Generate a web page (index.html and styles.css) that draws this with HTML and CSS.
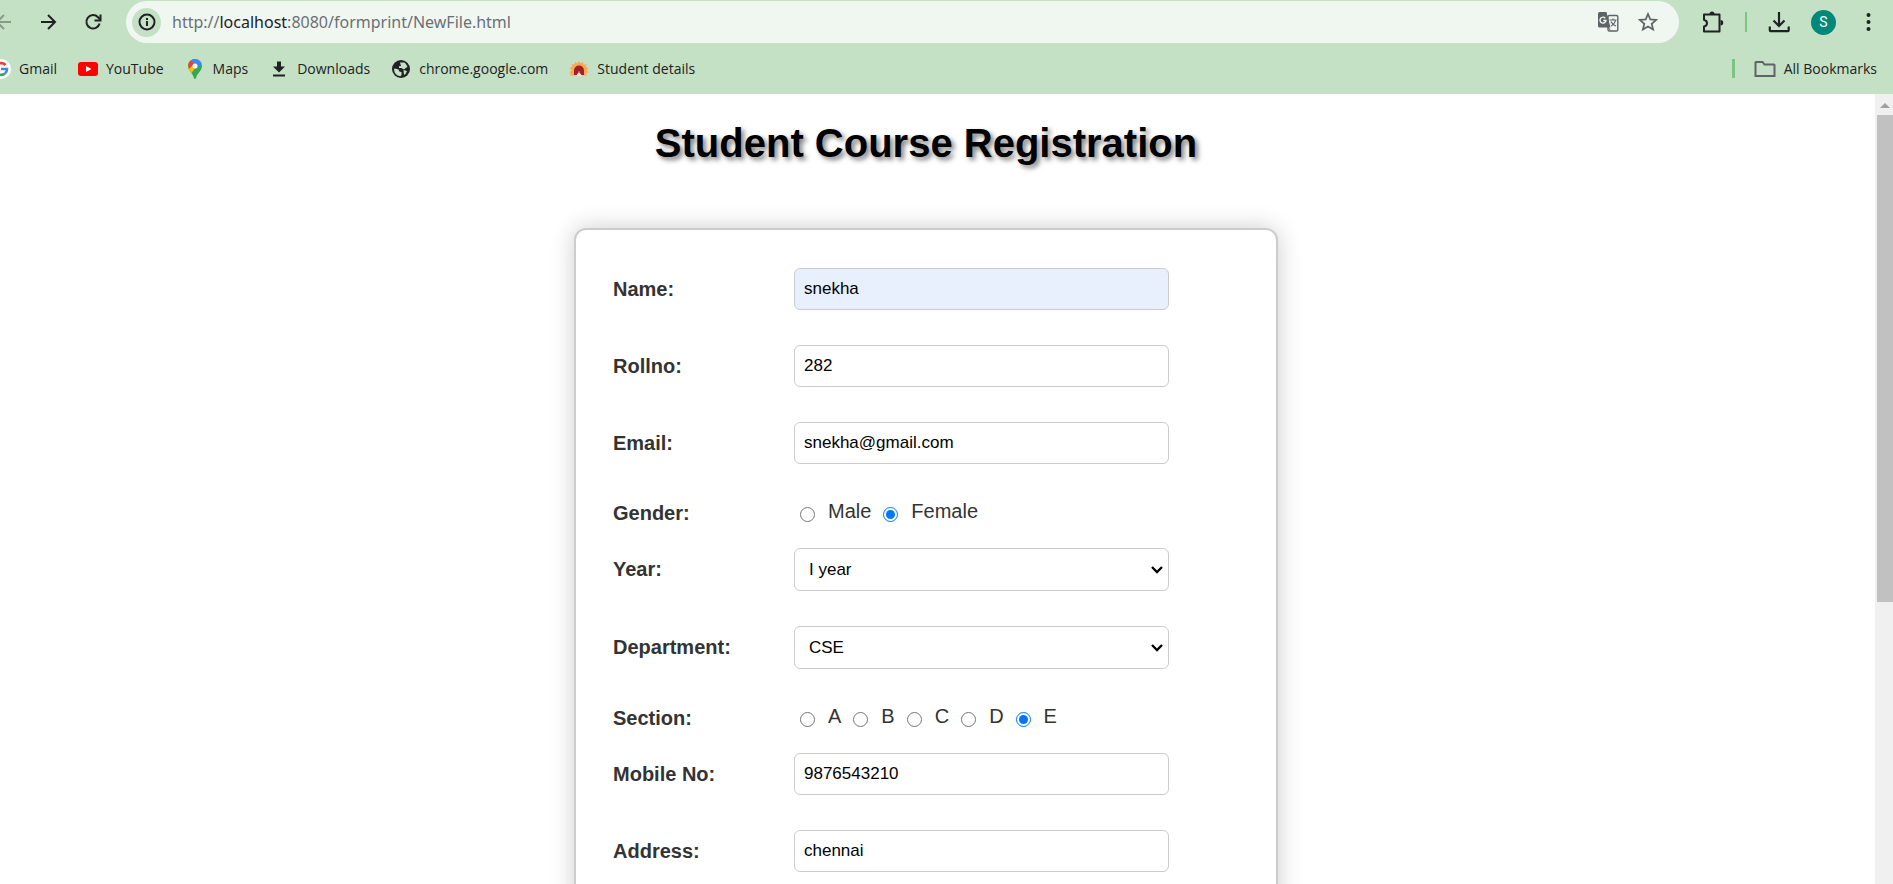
FILE: index.html
```html
<!DOCTYPE html>
<html lang="en">
<head>
<meta charset="utf-8">
<title>Student Course Registration</title>
<link rel="stylesheet" href="styles.css">
</head>
<body>
<header class="browser">
  <div class="toolbar">
    <nav class="nav-buttons">
      <button class="icon-button faded" aria-label="Back"><svg width="28" height="28" viewBox="0 0 28 28" fill="none" stroke="currentColor" stroke-width="2"><path d="M21 14H8M14 7l-7 7 7 7"/></svg></button>
      <button class="icon-button" aria-label="Forward"><svg width="28" height="28" viewBox="0 0 28 28" fill="none" stroke="currentColor" stroke-width="2"><path d="M7 14h13M14 7l7 7-7 7"/></svg></button>
      <button class="icon-button" aria-label="Reload"><svg width="28" height="28" viewBox="0 0 28 28" fill="none" stroke="currentColor" stroke-width="2"><path d="M21.600 15.500A6.700 6.700 0 1 1 20 9.200L22 11.300"/><path d="M22.500 6.500v6h-6"/></svg></button>
    </nav>
    <div class="address-bar">
      <button class="site-info" aria-label="Site information"><svg width="18" height="18" viewBox="0 0 18 18" fill="none" stroke="currentColor" stroke-width="2"><circle cx="9" cy="9" r="7.500"/><path d="M9 8v5M9 5v2"/></svg></button>
      <div class="url" role="textbox" aria-label="Address">http://<span class="host">localhost</span>:8080/formprint/NewFile.html</div>
      <div class="address-actions">
        <button class="icon-button gray" aria-label="Translate"><svg width="22" height="22" viewBox="0 0 22 22"><rect x="11" y="4.500" width="9.800" height="15.500" rx="1.300" fill="none" stroke="currentColor" stroke-width="1.400"/><path d="M2.500 1H7.500L9.500 1 13.500 16.500H2.500Q1 16.500 1 15V2.500Q1 1 2.500 1z" fill="currentColor"/><path d="M12 16.500l2.500 4-4.500-4z" fill="currentColor"/><path d="M8.300 7.200A3 3 0 1 0 9 9.500H6.300" fill="none" stroke="#f0f7f1" stroke-width="1.400"/><path d="M12.500 9h7M16 7.500V9M18.500 9c-.5 3-2.500 5-4.500 6M14 10.500c1 2.500 2.500 3.500 5 4.500" fill="none" stroke="currentColor" stroke-width="1.200"/></svg></button>
        <button class="icon-button gray" aria-label="Bookmark this page"><svg width="22" height="22" viewBox="0 0 22 22" fill="none" stroke="currentColor" stroke-width="1.700"><path d="M11 3l2.300 5.400 5.900.5-4.500 3.900 1.400 5.700-5.100-3-5.100 3 1.400-5.700-4.500-3.900 5.900-.5z"/></svg></button>
      </div>
    </div>
    <div class="tools">
      <button class="icon-button" aria-label="Extensions"><svg width="28" height="28" viewBox="0 0 28 28"><path d="M5 6.500h15.500v17H5v-5q3-.5 3-3.200T5 11.800z" fill="none" stroke="currentColor" stroke-width="2" stroke-linejoin="round"/><path d="M10.500 6a2.500 2.500 0 0 1 5 0zM21.500 12a2.500 2.500 0 0 1 0 5.500z" fill="currentColor"/></svg></button>
      <span class="tool-divider"></span>
      <button class="icon-button" aria-label="Downloads"><svg width="28" height="28" viewBox="0 0 28 28" fill="none" stroke="currentColor" stroke-width="2.200"><path d="M14 4v14M8.500 12.500L14 18l5.500-5.500M4.800 18.500v3.200q0 1.500 1.500 1.500h15.900q1.500 0 1.500-1.500v-3.200"/></svg></button>
      <button class="avatar" aria-label="Profile">S</button>
      <button class="icon-button" aria-label="Menu"><svg width="28" height="28" viewBox="0 0 28 28" fill="currentColor"><circle cx="14.500" cy="7" r="2"/><circle cx="14.500" cy="14" r="2"/><circle cx="14.500" cy="21" r="2"/></svg></button>
    </div>
  </div>
  <div class="bookmarks">
    <a class="bookmark" href="#"><svg width="20" height="20" viewBox="0 0 20 20" fill="none" stroke-width="2.600"><circle cx="10" cy="10" r="10" fill="#fff"/><path d="M14.500 6A6 6 0 0 0 5 7" stroke="#ea4335"/><path d="M5 7a6 6 0 0 0 0 6" stroke="#fbbc04"/><path d="M5 13a6 6 0 0 0 9 1.500" stroke="#34a853"/><path d="M14 14.500Q16 12.700 16 10H10" stroke="#4285f4"/></svg>Gmail</a>
    <a class="bookmark" href="#"><svg width="20" height="20" viewBox="0 0 20 20"><rect y="3" width="20" height="14" rx="3" fill="#f00"/><path d="M8 7l5.500 3L8 13z" fill="#fff"/></svg>YouTube</a>
    <a class="bookmark" href="#"><svg width="20" height="20" viewBox="0 0 20 20"><clipPath id="pin"><path d="M10 0a7 7 0 0 1 7 7c0 5-5 7-6 12.300q-1 1.400-2 0C8 14 3 12 3 7a7 7 0 0 1 7-7z"/></clipPath><g clip-path="url(#pin)"><path d="M0 0h20v20H0z" fill="#34a853"/><path d="M2 8l6-6 6 3-7 8z" fill="#4285f4"/><path d="M0 11l8-8 3 5-6 8z" fill="#fbbc04"/><path d="M2 2L5 0l5 4-6 6z" fill="#ea4335"/><path d="M6 0h7l5 4-6 5-4-5z" fill="#4285f4"/></g><circle cx="10" cy="7" r="2.500" fill="#fff"/></svg>Maps</a>
    <a class="bookmark" href="#"><svg width="20" height="20" viewBox="0 0 20 20" fill="#202124"><path d="M8 2.500h4v5h4l-6 6-6-6h4zM4 15.500h12v2H4z"/></svg>Downloads</a>
    <a class="bookmark" href="#"><svg width="20" height="20" viewBox="-1 -1 20 20"><circle cx="9" cy="9" r="9" fill="#202124"/><path d="M2 8.500l3 .5q2 0 2 1.500t2.500 1.500V15l-1 1.200Q2 15.500 2 8.500zM8 2.500h4.500q2 1.500 3 4.500l-2 1q-1 2-2.500 1L9.500 8H7V6.200l2-.2zM11.500 10l3.500 1q-1 3-3 4z" fill="#c5e1c5"/></svg>chrome.google.com</a>
    <a class="bookmark" href="#"><svg width="20" height="20" viewBox="0 0 20 20"><path d="M10 2l1.600 2.200L14 2.800l.6 2.700 2.900-.2-.7 2.800 2.700.8-1.700 2.300 2 2-2.600 1 .8 2.300H1l.8-2.300-1.300-1 2-2L.5 8.900l2.700-.8-.7-2.800 2.900.2.600-2.700 2.400 1.400z" fill="#f6a95b"/><path d="M5 16V11.500a5 5 0 0 1 10 0V16z" fill="#a61e22"/><path d="M9 14q0-2 1-2t1 2l2 3H7z" fill="#f5e6de"/><path d="M9.500 12h1v2h-1z" fill="#a61e22"/></svg>Student details</a>
    <div class="all-bookmarks">
      <button class="bookmark"><svg width="22" height="20" viewBox="0 0 22 20" fill="none" stroke="#5f6368" stroke-width="2"><path d="M2 3h6.500l2 2.500H20q.5 0 .5.500v11H1.500V3.500Q1.500 3 2 3z"/></svg>All Bookmarks</button>
    </div>
  </div>
</header>
<div class="viewport">
  <main class="page">
    <h1 class="title">Student Course Registration</h1>
    <form class="card">
      <div class="row"><label class="label" for="name">Name:</label><input class="field filled" id="name" type="text" value="snekha"></div>
      <div class="row"><label class="label" for="rollno">Rollno:</label><input class="field" id="rollno" type="text" value="282"></div>
      <div class="row"><label class="label" for="email">Email:</label><input class="field" id="email" type="email" value="snekha@gmail.com"></div>
      <div class="row choices" role="radiogroup" aria-labelledby="gender">
        <span class="label" id="gender">Gender:</span>
        <div class="options">
          <label class="option"><input type="radio" name="gender"><span>Male</span></label>
          <label class="option"><input type="radio" name="gender" checked><span>Female</span></label>
        </div>
      </div>
      <div class="row"><label class="label" for="year">Year:</label><div class="select-box"><select class="field select" id="year"><option>I year</option></select><svg class="chevron" width="12" height="8" viewBox="0 0 12 8" fill="none" stroke="#000" stroke-width="2.300"><path d="M1 1l5 5 5-5"/></svg></div></div>
      <div class="row"><label class="label" for="department">Department:</label><div class="select-box"><select class="field select" id="department"><option>CSE</option></select><svg class="chevron" width="12" height="8" viewBox="0 0 12 8" fill="none" stroke="#000" stroke-width="2.300"><path d="M1 1l5 5 5-5"/></svg></div></div>
      <div class="row choices" role="radiogroup" aria-labelledby="section">
        <span class="label" id="section">Section:</span>
        <div class="options">
          <label class="option"><input type="radio" name="section"><span>A</span></label>
          <label class="option"><input type="radio" name="section"><span>B</span></label>
          <label class="option"><input type="radio" name="section"><span>C</span></label>
          <label class="option"><input type="radio" name="section"><span>D</span></label>
          <label class="option"><input type="radio" name="section" checked><span>E</span></label>
        </div>
      </div>
      <div class="row"><label class="label" for="mobile">Mobile No:</label><input class="field" id="mobile" type="text" value="9876543210"></div>
      <div class="row"><label class="label" for="address">Address:</label><input class="field" id="address" type="text" value="chennai"></div>
    </form>
  </main>
  <div class="scrollbar" aria-hidden="true">
    <svg class="scroll-arrow" width="16" height="21" viewBox="0 0 16 21" fill="#a0a0a0"><path d="M8 9l5 5H3z"/></svg>
    <div class="scroll-thumb"></div>
  </div>
</div>
</body>
</html>
```
FILE: styles.css
```css
* { box-sizing: border-box; }

body {
  margin: 0;
  height: 100vh;
  display: flex;
  flex-direction: column;
  overflow: hidden;
  background: #fff;
  font-family: "Liberation Sans", Arial, sans-serif;
}

button {
  border: 0;
  padding: 0;
  background: none;
  font: inherit;
  color: inherit;
}

/* Browser chrome */
.browser {
  flex: none;
  padding-top: 1px;
  background: #c5e1c5;
  color: #202124;
  font-family: "Open Sans", "Noto Sans", sans-serif;
}

.toolbar { display: flex; align-items: center; height: 42px; }

.nav-buttons { display: flex; gap: 16px; margin-left: -10px; padding-right: 20px; }

.icon-button { display: flex; color: #202124; }
.faded { color: #889b8a; }
.gray { color: #5f6368; }

.address-bar {
  flex: 1;
  display: flex;
  align-items: center;
  height: 42px;
  padding: 0 20px 0 6px;
  border-radius: 21px;
  background: #f0f7f1;
}

.site-info {
  display: flex;
  align-items: center;
  justify-content: center;
  width: 29px;
  height: 29px;
  border-radius: 50%;
  background: #c5e1c5;
}

.url { flex: 1; padding-left: 11px; font-family: "Noto Sans", sans-serif; font-size: 16px; color: #6b7075; }
.host { color: #202124; }
.address-actions { display: flex; gap: 18px; }

.tools { display: flex; align-items: center; gap: 18px; padding: 0 11px 0 20px; }
.tool-divider { width: 2px; height: 20px; background: #7cc47f; }

.avatar {
  width: 25px;
  height: 25px;
  border-radius: 50%;
  background: #00897b;
  color: #fff;
  font-family: Roboto, sans-serif;
  font-size: 14px;
}

.bookmarks { display: flex; align-items: center; gap: 21px; height: 51px; margin-left: -9px; padding-right: 16px; }
.bookmark { display: flex; align-items: center; gap: 8px; font-size: 14px; color: #202124; text-decoration: none; white-space: nowrap; }
.all-bookmarks { display: flex; margin-left: auto; padding-left: 19px; border-left: 3px solid #7cc47f; height: 19px; }

/* Web page */
.viewport { flex: 1; display: flex; min-height: 0; overflow: hidden; }
.page { flex: 1; padding: 26px 23px 0 0; }

.title {
  margin: 0 0 62px;
  font-size: 40px;
  line-height: 46px;
  text-align: center;
  color: #000;
  text-shadow: 3px 3px 5px rgba(0, 0, 0, .5);
}

.card {
  max-width: 704px;
  margin: 0 auto;
  padding: 38px 37px 56px;
  border: 2px solid #ccc;
  border-radius: 12px;
  background: #fff;
  box-shadow: 0 0 25px rgba(0, 0, 0, .2);
}

.row { display: grid; grid-template-columns: 181px 375px; align-items: center; margin-bottom: 35px; }
.row:last-child { margin-bottom: 0; }
.label { font-size: 20px; line-height: 23px; font-weight: bold; color: #333; }

.field {
  width: 100%;
  height: 42px;
  padding: 0 9px;
  border: 1px solid #ccc;
  border-radius: 6px;
  background: #fff;
  color: #000;
  font-family: inherit;
  font-size: 17px;
}
.filled { background: #e8f0fe; }

.select-box { display: grid; align-items: center; }
.select-box > * { grid-area: 1 / 1; }
.select { height: 43px; padding: 0 14px; appearance: none; }
.chevron { justify-self: end; margin-right: 6px; pointer-events: none; }

.choices { height: 28px; margin-bottom: 21px; }
.options { display: flex; gap: 12px; padding-left: 6px; }
.option { display: flex; align-items: center; gap: 13px; font-size: 20px; line-height: 23px; color: #333; }
.option input { width: 15px; height: 15px; margin: 3px 0 0; }
.option span { padding-bottom: 3px; }

/* Scrollbar */
.scrollbar { display: flex; flex-direction: column; width: 18px; padding-left: 2px; background: #f0f0f0; }
.scroll-arrow { flex: none; }
.scroll-thumb { height: 63%; max-height: 487px; background: #c1c1c1; }
```
